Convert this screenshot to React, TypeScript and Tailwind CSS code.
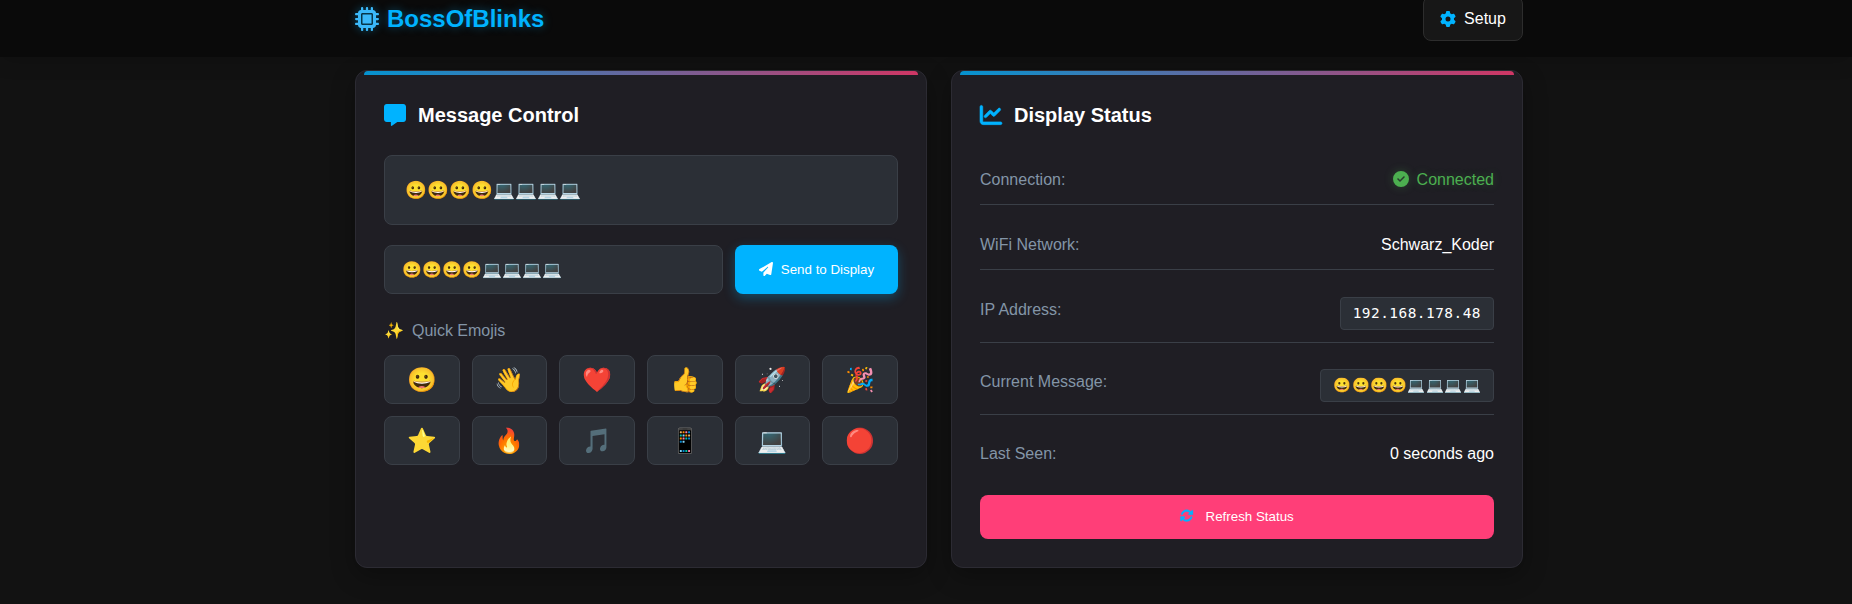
import React from "react";
import {
  FaMessage,
  FaChartLine,
  FaGear,
  FaPaperPlane,
  FaCircleCheck,
  FaRotate,
  FaMicrochip,
} from "react-icons/fa6";

const message = "😀😀😀😀💻💻💻💻";
const emojis = ["😀", "👋", "❤️", "👍", "🚀", "🎉", "⭐", "🔥", "🎵", "📱", "💻", "🔴"];

function Card({ icon, title, children }: { icon: React.ReactNode; title: string; children: React.ReactNode }) {
  return (
    <section className="relative flow-root h-[498px] rounded-xl border border-[#2c2b33] bg-[#1f1e24] px-7 shadow-[0_8px_24px_rgba(0,0,0,0.3)]">
      <div className="absolute top-0 right-2 left-2 h-1 rounded-t bg-[linear-gradient(90deg,#00b3ff,#ff3e78)] opacity-80" />
      <h2 className="mt-7 flex h-8 items-center gap-3 text-[20px] font-bold text-white">
        <span className="flex w-[22px] text-[22px] text-[#00b3ff]">{icon}</span>
        <span className="pt-0.5">{title}</span>
      </h2>
      {children}
    </section>
  );
}

function Row({ label, height, children }: { label: string; height: string; children: React.ReactNode }) {
  return (
    <div className={`flex items-start justify-between border-b border-[#3a3f47] ${height}`}>
      <span className="text-[#8395a7]">{label}</span>
      {children}
    </div>
  );
}

export default function App() {
  return (
    <div className="h-[604px] overflow-hidden bg-[#121212] font-['Liberation_Sans',Arial,sans-serif] text-base leading-[25.6px] text-white">
      <header className="relative z-10 flow-root h-[57px] bg-[#0a0a0a] shadow-[0_4px_20px_rgba(0,0,0,0.15)]">
        <div className="-mt-[4px] ml-[355px] flex w-[1168px] items-start justify-between">
          <div className="mt-[7px] flex h-8 items-center gap-2 text-2xl font-bold text-[#00b3ff] [text-shadow:0_0_10px_rgba(0,179,255,0.4)]">
            <FaMicrochip className="text-[#3bb9fa] drop-shadow-[0_0_4px_rgba(0,179,255,0.4)]" />
            BossOfBlinks
          </div>
          <button className="flex h-[45px] w-[100px] items-center justify-center gap-2 rounded-lg border border-[#2d2d2d] bg-[#171717] text-base">
            <FaGear className="text-[#00b3ff]" />
            Setup
          </button>
        </div>
      </header>
      <main className="mt-[13px] ml-[355px] grid w-[1168px] grid-cols-2 gap-6">
        <Card icon={<FaMessage />} title="Message Control">
          <div className="mt-6 flex h-[70px] items-center rounded-lg border border-[#3a3f47] bg-[#2b2f36] px-5 pt-0.5 text-[17.6px]">
            {message}
          </div>
          <div className="mt-5 flex gap-3">
            <input
              className="h-[49px] w-[339px] rounded-lg border border-[#3a3f47] bg-[#2b2f36] px-[17px] text-base outline-none"
              defaultValue={message}
            />
            <button className="flex h-[49px] w-[163px] items-center justify-center gap-2 rounded-lg bg-[#00b3ff] text-[13.333px] shadow-[0_4px_12px_rgba(0,179,255,0.3)]">
              <FaPaperPlane className="mb-0.5 text-[14px]" />
              Send to Display
            </button>
          </div>
          <h3 className="mt-6 flex h-[25px] items-center gap-2 text-[#8395a7]">
            <span>✨</span>Quick Emojis
          </h3>
          <div className="mt-3 grid grid-cols-6 gap-3">
            {emojis.map((emoji) => (
              <button
                key={emoji}
                className="flex h-[49px] items-center justify-center rounded-lg border border-[#3a3f47] bg-[#2b2f36] text-2xl"
              >
                {emoji}
              </button>
            ))}
          </div>
        </Card>
        <Card icon={<FaChartLine className="overflow-visible [stroke-width:14]" />} title="Display Status">
          <div className="mt-9 flex flex-col">
            <Row label="Connection:" height="h-[38px]">
              <span className="flex items-center gap-2 text-[#4caf50] [text-shadow:0_0_8px_rgba(76,175,80,0.3)]">
                <FaCircleCheck className="mb-0.5 drop-shadow-[0_0_4px_rgba(76,175,80,0.3)]" />
                Connected
              </span>
            </Row>
            <Row label="WiFi Network:" height="mt-[27px] h-[38px]">
              <span>Schwarz_Koder</span>
            </Row>
            <Row label="IP Address:" height="mt-[27px] h-[46px]">
              <span className="flex h-[33px] items-center rounded border border-[#3a3f47] bg-[#2b2f36] px-3 font-['DejaVu_Sans_Mono',monospace] text-[14.4px] tracking-[0.5px]">
                192.168.178.48
              </span>
            </Row>
            <Row label="Current Message:" height="mt-[26px] h-[46px]">
              <span className="flex h-[33px] items-center rounded border border-[#3a3f47] bg-[#2b2f36] px-3 font-['DejaVu_Sans_Mono',monospace] text-[14.4px] tracking-[0.5px]">
                {message}
              </span>
            </Row>
            <div className="mt-[26px] flex justify-between">
              <span className="text-[#8395a7]">Last Seen:</span>
              <span>0 seconds ago</span>
            </div>
          </div>
          <button className="mt-7 flex h-11 w-full items-center justify-center gap-3 rounded-lg bg-[#ff3e78] text-[13.333px]">
            <FaRotate className="mb-0.5 overflow-visible text-[#00b3ff] [stroke-width:14]" />
            Refresh Status
          </button>
        </Card>
      </main>
    </div>
  );
}
